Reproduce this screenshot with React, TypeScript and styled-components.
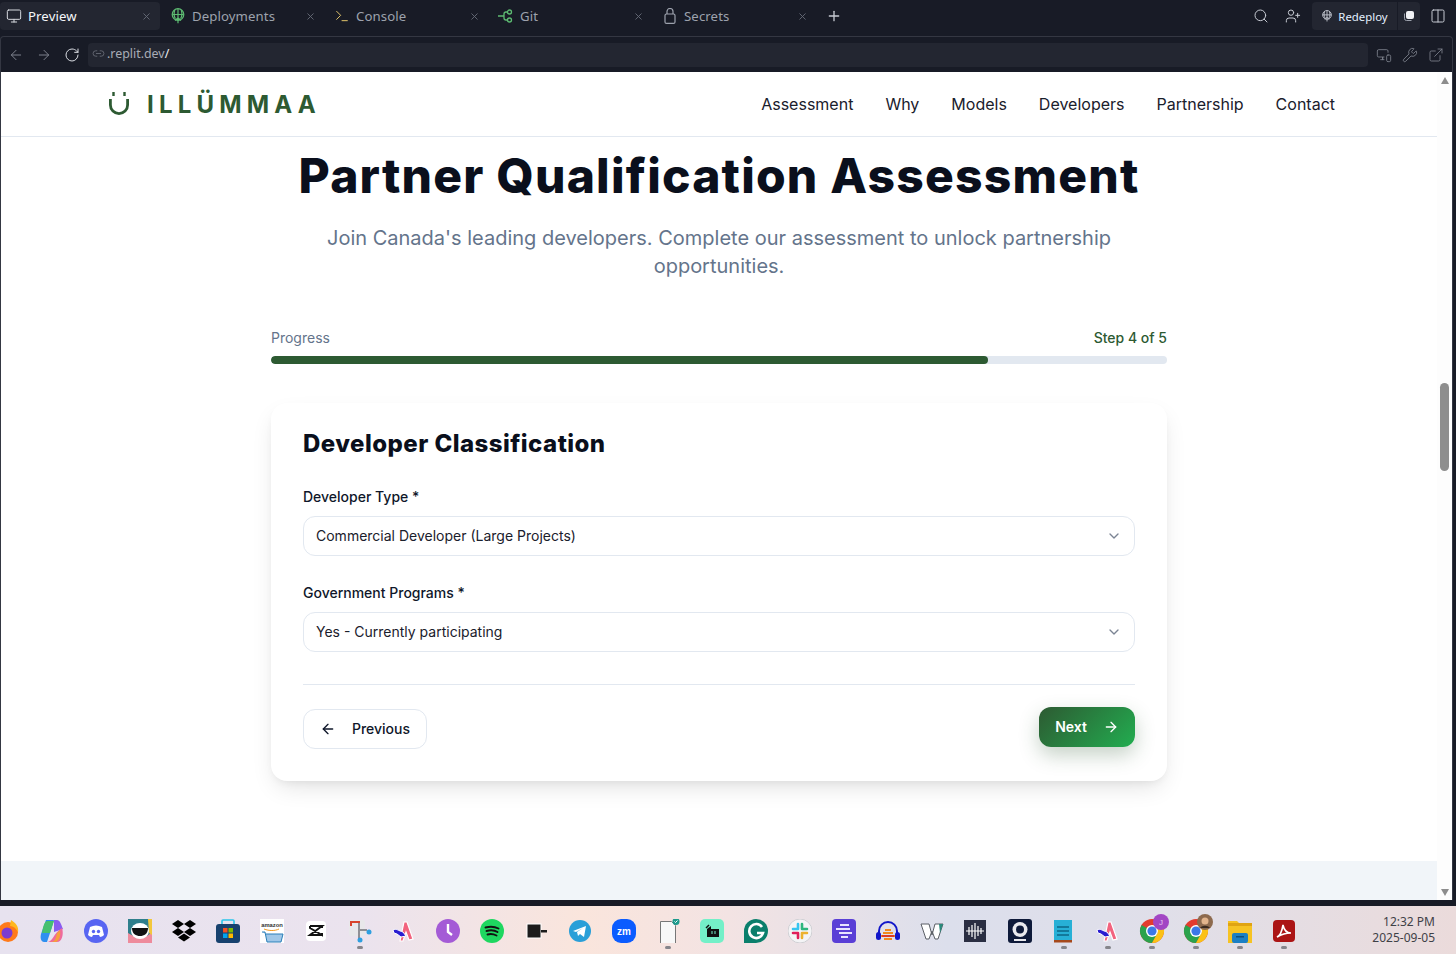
import React from "react";
import styled, { createGlobalStyle } from "styled-components";
import {
  ArrowLeft,
  ArrowRight,
  ChevronDown,
  Columns2,
  ExternalLink,
  Link2,
  Monitor,
  MonitorSmartphone,
  Plus,
  RotateCw,
  Search,
  Terminal,
  UserPlus,
  Wrench,
  X,
} from "lucide-react";

const GlobalStyle = createGlobalStyle`
  html, body {
    margin: 0;
    padding: 0;
    overflow: hidden;
  }
  body {
    font-family: "Inter", "Liberation Sans", sans-serif;
    background: #181b26;
  }
  * {
    box-sizing: border-box;
  }
`;

const Shell = styled.div`
  width: 1456px;
  height: 954px;
  display: flex;
  flex-direction: column;
  overflow: hidden;
  background: #181b26;
`;

const TabBar = styled.div`
  height: 36px;
  flex: none;
  display: flex;
  align-items: flex-start;
  padding-top: 2px;
`;

const Tab = styled.div<{ $active?: boolean }>`
  width: 160px;
  height: 28px;
  margin-right: 4px;
  padding: 0 8px 0 6px;
  display: flex;
  align-items: center;
  gap: 6px;
  border-radius: 4px;
  background: ${(p) => (p.$active ? "#232631" : "transparent")};
  color: ${(p) => (p.$active ? "#f5f7fa" : "#9da2ad")};
  font-family: "Noto Sans", sans-serif;
  font-size: 13.2px;
  letter-spacing: 0.1px;
`;

const TabIcon = styled.span<{ $color: string }>`
  width: 16px;
  height: 16px;
  flex: none;
  display: flex;
  align-items: center;
  justify-content: center;
  color: ${(p) => p.$color};
`;

const TabLabel = styled.span`
  flex: 1;
`;

const CloseIcon = styled(X)`
  width: 11px;
  height: 11px;
  color: #666b77;
`;

const AddTab = styled(Plus)`
  width: 16px;
  height: 16px;
  color: #c6cad2;
  margin: 6px 0 0 6px;
`;

const TabActions = styled.div`
  margin-left: auto;
  height: 28px;
  display: flex;
  align-items: center;
  padding-right: 10px;
  color: #c6cad2;
`;

const ActionIcon = styled.span`
  width: 16px;
  height: 16px;
  margin-right: 16px;
  display: flex;
`;

const RedeployGroup = styled.div`
  height: 28px;
  width: 85px;
  margin-left: -5px;
  display: flex;
  align-items: center;
  justify-content: center;
  gap: 5px;
  border-radius: 4px 0 0 4px;
  background: #232631;
  color: #e4f0ff;
  font-family: "Noto Sans", sans-serif;
  font-size: 11.4px;
`;

const RedeployIcon = styled.span`
  display: flex;
  color: #c6cad2;
`;

const StackButton = styled.div`
  width: 22px;
  height: 28px;
  margin: 0 10px 0 1px;
  display: flex;
  align-items: center;
  justify-content: center;
  border-radius: 0 4px 4px 0;
  background: #232631;
`;

const Frame = styled.div`
  flex: 1;
  min-height: 0;
  margin-right: 3px;
  display: flex;
  flex-direction: column;
  border: 1px solid #343742;
  border-bottom: none;
  border-radius: 4px 4px 0 0;
`;

const UrlRow = styled.div`
  height: 35px;
  flex: none;
  display: flex;
  align-items: center;
  padding-left: 1px;
  color: #8d919c;
`;

const NavButton = styled.span<{ $light?: boolean }>`
  width: 28px;
  height: 16px;
  flex: none;
  display: flex;
  justify-content: center;
  color: ${(p) => (p.$light ? "#d9dce2" : "#7d818c")};
`;

const UrlField = styled.div`
  width: 1280px;
  height: 24px;
  margin-left: 2px;
  padding: 0 0 2px 4px;
  display: flex;
  align-items: center;
  gap: 2px;
  border-radius: 4px;
  background: #232631;
  color: #a8acb6;
  font-family: "Noto Sans", sans-serif;
  font-size: 12.4px;
`;

const UrlSlash = styled.span`
  color: #f0f1f4;
`;

const UrlTools = styled.div`
  flex: 1;
  display: flex;
  justify-content: flex-end;
  gap: 10px;
  padding-right: 8px;
  color: #80848f;
`;

const Viewport = styled.div`
  flex: 1;
  min-height: 0;
  display: flex;
  background: #fff;
`;

const Page = styled.div`
  flex: 1;
  min-width: 0;
  display: flex;
  flex-direction: column;
  overflow: hidden;
  background: #fff;
`;

const ScrollTrack = styled.div`
  width: 15px;
  flex: none;
  display: flex;
  flex-direction: column;
  align-items: center;
  background: #fdfdfd;
  padding-top: 5px;
`;

const ScrollArrow = styled.div<{ $down?: boolean }>`
  width: 0;
  height: 0;
  border-left: 4.5px solid transparent;
  border-right: 4.5px solid transparent;
  ${(p) =>
    p.$down
      ? "border-top: 7px solid #8d8d8d; margin-top: auto; margin-bottom: 4px;"
      : "border-bottom: 7px solid #8d8d8d;"}
`;

const ScrollThumb = styled.div`
  width: 9px;
  height: 88px;
  margin-top: 299px;
  border-radius: 5px;
  background: #8e8e8e;
`;

const Header = styled.header`
  height: 65px;
  flex: none;
  display: flex;
  align-items: center;
  padding: 0 102px 0 108px;
  border-bottom: 1px solid #e2e8f0;
`;

const Logo = styled.div`
  display: flex;
  align-items: center;
  gap: 16px;
  color: #2d5a32;
`;

const LogoText = styled.span`
  font-family: "Inter", sans-serif;
  font-weight: 700;
  font-size: 24px;
  letter-spacing: 5.2px;
`;

const Menu = styled.nav`
  margin-left: auto;
  display: flex;
  gap: 32px;
`;

const MenuLink = styled.a`
  font-size: 16px;
  color: #1a202c;
`;

const Main = styled.main`
  flex: 1;
  min-height: 0;
  display: flex;
  flex-direction: column;
  align-items: center;
`;

const Title = styled.h1`
  margin: 9px 0 0;
  font-family: "Inter", sans-serif;
  font-size: 48px;
  line-height: 60px;
  font-weight: 800;
  letter-spacing: 1.2px;
  color: #0a0f1c;
`;

const Subtitle = styled.p`
  width: 800px;
  margin: 18px 0 0;
  font-size: 20px;
  line-height: 28px;
  text-align: center;
  color: #64748b;
`;

const Progress = styled.section`
  width: 896px;
  margin-top: 48px;
`;

const ProgressRow = styled.div`
  display: flex;
  justify-content: space-between;
  font-size: 14px;
  line-height: 20px;
  color: #64748b;
`;

const ProgressStep = styled.span`
  font-weight: 500;
  color: #2d5a32;
`;

const ProgressTrack = styled.div`
  height: 8px;
  margin-top: 8px;
  border-radius: 4px;
  background: #e2e8f0;
  overflow: hidden;
`;

const ProgressFill = styled.div`
  height: 100%;
  border-radius: 4px;
  background: #2d5a32;
`;

const Card = styled.section`
  width: 896px;
  margin-top: 39px;
  padding: 25px 32px 32px;
  border-radius: 16px;
  background: #fff;
  box-shadow: 0 10px 25px -5px rgba(0, 0, 0, 0.12), 0 4px 10px -4px rgba(0, 0, 0, 0.08);
`;

const CardTitle = styled.h2`
  margin: 0 0 25px;
  font-family: "Inter", sans-serif;
  font-size: 24px;
  line-height: 32px;
  font-weight: 800;
  letter-spacing: 0.46px;
  color: #0a0f1c;
`;

const Field = styled.div`
  margin-bottom: 25px;
`;

const FieldLabel = styled.label`
  display: block;
  margin-bottom: 7px;
  font-size: 14px;
  line-height: 24px;
  font-weight: 500;
  color: #0f172a;
`;

const Select = styled.div`
  height: 40px;
  padding: 0 12px 1px;
  display: flex;
  align-items: center;
  justify-content: space-between;
  border: 1px solid #e2e8f0;
  border-radius: 12px;
  font-size: 14px;
  color: #1a202c;
`;

const SelectChevron = styled(ChevronDown)`
  width: 16px;
  height: 16px;
  color: #7b8494;
`;

const Actions = styled.div`
  margin-top: 32px;
  padding-top: 22px;
  display: flex;
  justify-content: space-between;
  align-items: flex-start;
  border-top: 1px solid #e2e8f0;
`;

const BackButton = styled.button`
  width: 124px;
  height: 40px;
  margin-top: 2px;
  padding: 0 0 1px;
  display: flex;
  align-items: center;
  justify-content: center;
  gap: 16px;
  border: 1px solid #e2e8f0;
  border-radius: 12px;
  background: #fff;
  font-family: inherit;
  font-size: 14px;
  font-weight: 500;
  color: #0f172a;
`;

const NextButton = styled.button`
  width: 96px;
  height: 40px;
  padding: 0 0 1px;
  display: flex;
  align-items: center;
  justify-content: center;
  gap: 16px;
  border: none;
  border-radius: 12px;
  background: linear-gradient(135deg, #2d5a32, #22ad50);
  box-shadow: 0 8px 20px rgba(45, 90, 50, 0.28);
  font-family: inherit;
  font-size: 14px;
  font-weight: 600;
  color: #fff;
`;

const FooterBand = styled.div`
  height: 39px;
  flex: none;
  background: #f1f5f9;
  margin-top: auto;
`;

const BottomStrip = styled.div`
  height: 6px;
  flex: none;
  background: #181b26;
`;

const Taskbar = styled.div`
  height: 48px;
  flex: none;
  display: flex;
  align-items: center;
  padding-top: 2px;
  background: linear-gradient(90deg, #e7e2ef 0%, #ebe3ee 25%, #fae5dc 40%, #f3e3e3 50%, #dcdfec 65%, #e0dfe9 80%, #ebdbdb 100%);
  color: #3f4147;
`;

const TrayIcons = styled.div`
  display: flex;
  gap: 20px;
  margin-left: -4px;
`;

const TrayItem = styled.div<{ $running?: boolean }>`
  width: 24px;
  height: 24px;
  position: relative;
  svg {
    display: block;
  }
  &::after {
    content: "";
    display: ${(p) => (p.$running ? "block" : "none")};
    position: absolute;
    left: 9px;
    bottom: -6px;
    width: 6px;
    height: 3px;
    border-radius: 2px;
    background: #85858b;
  }
`;

const Clock = styled.div`
  margin-left: auto;
  margin-top: -2px;
  padding-right: 21px;
  text-align: right;
  font-family: "Noto Sans", sans-serif;
  font-size: 12px;
  line-height: 16px;
`;

const GreenGlobe = ({ size }: { size: number }) => (
  <svg width={size} height={size} viewBox="0 0 16 16" fill="none" stroke="currentColor" strokeWidth="1.2">
    <circle cx="8" cy="6.5" r="5.8" />
    <path d="M2.2 6.500h11.600M8 .7v14.600M4.800 2c-1 2.600-1 6 .6 8.600M11.200 2c1 2.600 1 6-.6 8.600M5 12.500 8 9.800l3 2.700" />
  </svg>
);

const GitNodes = () => (
  <svg width="16" height="16" viewBox="0 0 16 16" fill="none" stroke="currentColor" strokeWidth="1.300">
    <path d="M0 8h6M9.500 4H8a2 2 0 0 0-2 2v4a2 2 0 0 0 2 2h1.500" />
    <circle cx="11.500" cy="4" r="2" />
    <circle cx="11.500" cy="12" r="2" />
  </svg>
);

const Padlock = () => (
  <svg width="16" height="16" viewBox="0 0 16 16" fill="none" stroke="currentColor" strokeWidth="1.200">
    <rect x="3" y="6" width="10" height="9.400" rx="1.500" />
    <path d="M5 6V3.500a3 3 0 0 1 6 0V6" />
  </svg>
);

const Grid = ({ children }: { children: React.ReactNode }) => (
  <svg width="24" height="24" viewBox="0 0 24 24">
    {children}
  </svg>
);

const ArcArt = () => (
  <Grid>
    <path d="M8 22 12 3h3l6 17-4 1-3-8-3 9z" fill="#f2637e" stroke="#fff" strokeWidth="1.200" />
    <path d="M1 11c3-2 6 1 10 2l3 4-5 1-4-3-3-1z" fill="#2a1dd0" stroke="#fff" strokeWidth="1" />
  </Grid>
);

const ChromeArt = ({ children }: { children: React.ReactNode }) => (
  <svg width="30" height="30" viewBox="0 0 30 30" style={{ overflow: "visible" }}>
    <circle cx="12" cy="12" r="12" fill="#e33b2e" />
    <path d="M12 12 1.600 6A12 12 0 0 0 12 24l6-10z" fill="#2ba24c" />
    <path d="M12 6h10.400A12 12 0 0 1 12 24l6-11z" fill="#fbc116" />
    <circle cx="12" cy="12" r="6" fill="#fff" />
    <circle cx="12" cy="12" r="4.600" fill="#3b78e7" />
    {children}
  </svg>
);

const trayIcons: { key: string; running?: boolean; art: React.ReactNode }[] = [
  {
    key: "firefox",
    art: (
      <Grid>
        <circle cx="12" cy="13" r="10" fill="#ff7a1a" />
        <circle cx="11" cy="14" r="5.500" fill="#7d3bd1" />
        <path d="M15 1c5 3 8 7 7 12-2-4-5-6-8-6z" fill="#ffb81f" />
      </Grid>
    ),
  },
  {
    key: "copilot",
    art: (
      <Grid>
        <path d="M6 1h8l-3 10-4 12H4C1 23 0 19 1 15z" fill="#2f8ff0" />
        <path d="M7 2h7l-4 12H2C3 8 4 3 7 2z" fill="#46c06f" />
        <path d="M14 1h3c3 0 4 4 6 9l-9 3z" fill="#8a5cf0" />
        <path d="M22 9c2 6 0 14-5 14H8c5-1 5-8 14-14z" fill="#ef6a9c" />
        <path d="M11 23c4 0 5-4 6-9l3-3c1 6-1 12-5 12z" fill="#f6a03c" />
      </Grid>
    ),
  },
  {
    key: "discord",
    art: (
      <Grid>
        <circle cx="12" cy="12" r="12" fill="#5865f2" />
        <path d="M6 8c4-2 8-2 12 0l2 8c-1 1-3 2-4 2l-1-2H9l-1 2c-1 0-3-1-4-2z" fill="#fff" />
        <circle cx="9.500" cy="12.500" r="1.700" fill="#5865f2" />
        <circle cx="14.500" cy="12.500" r="1.700" fill="#5865f2" />
      </Grid>
    ),
  },
  {
    key: "ublock",
    art: (
      <Grid>
        <rect width="24" height="24" fill="#2f7f8c" />
        <path d="M0 14c6 4 18 8 24-2v12H0z" fill="#ee8b9c" />
        <path d="M20 0h4v16l-3-2z" fill="#f3c73c" />
        <ellipse cx="12" cy="12" rx="9" ry="8" fill="#fff" />
        <path d="M4 9h16c0 6-4 8-8 8s-8-2-8-8z" fill="#111" />
      </Grid>
    ),
  },
  {
    key: "dropbox",
    art: (
      <Grid>
        <path d="M6 1 0 5l6 4-6 4 6 4 6-4 6 4 6-4-6-4 6-4-6-4-6 4zM12 5l6 4-6 4-6-4z" fill="#000" fillRule="evenodd" />
        <path d="m6 18.500 6-4 6 4-6 4z" fill="#000" />
      </Grid>
    ),
  },
  {
    key: "store",
    art: (
      <Grid>
        <path d="M6 5V2c0-1 1-1 1-1h10s1 0 1 1v3" fill="none" stroke="#29c5ea" strokeWidth="1.600" />
        <rect y="5" width="24" height="19" rx="3" fill="#17416e" />
        <rect x="7" y="9" width="4.500" height="4.500" fill="#f25022" />
        <rect x="12.500" y="9" width="4.500" height="4.500" fill="#7fba00" />
        <rect x="7" y="14.500" width="4.500" height="4.500" fill="#00a4ef" />
        <rect x="12.500" y="14.500" width="4.500" height="4.500" fill="#ffb900" />
      </Grid>
    ),
  },
  {
    key: "amazon",
    art: (
      <Grid>
        <rect width="24" height="24" fill="#fff" />
        <text x="12" y="8" fontSize="5.800" fontWeight="700" textAnchor="middle" fill="#333" fontFamily="Liberation Sans">
          amazon
        </text>
        <path d="M4 10c5 2 11 2 15 0" fill="none" stroke="#f39a1e" strokeWidth="1" />
        <path d="M2 13h3l2 10h14l2-8H6" fill="#9fc7e8" stroke="#2a7fb8" strokeWidth="1" />
      </Grid>
    ),
  },
  {
    key: "capcut",
    art: (
      <Grid>
        <rect x="2" y="2" width="20" height="20" rx="4" fill="#fff" />
        <path d="M6 7h12l-12 9h12M6 7v2l12 7v-2M18 7v2" fill="none" stroke="#111" strokeWidth="2" />
      </Grid>
    ),
  },
  {
    key: "snip",
    running: true,
    art: (
      <Grid>
        <rect x="1" y="1" width="16" height="16" rx="2" fill="#e8e8ea" />
        <path d="M2 2h10v2H4v3H2z" fill="#d8442c" />
        <path d="M11 4v16M11 11h8" stroke="#8f9095" strokeWidth="2" />
        <circle cx="21" cy="13" r="2.500" fill="#2e9fe0" />
        <circle cx="12" cy="21" r="2.500" fill="#2e9fe0" />
      </Grid>
    ),
  },
  { key: "arc", art: <ArcArt /> },
  {
    key: "clockify",
    art: (
      <Grid>
        <circle cx="12" cy="12" r="12" fill="#a45bd6" />
        <path d="M12 5v8l4 3" fill="none" stroke="#fff" strokeWidth="2.400" />
      </Grid>
    ),
  },
  {
    key: "spotify",
    art: (
      <Grid>
        <circle cx="12" cy="12" r="12" fill="#1ed760" />
        <path d="M5.500 8.500c4-1 9-1 13 1M6.500 12c3.500-1 8-.8 11 1M7.500 15.500c3-.8 6-.5 9 1" fill="none" stroke="#111" strokeWidth="1.900" strokeLinecap="round" />
      </Grid>
    ),
  },
  {
    key: "block",
    art: (
      <Grid>
        <rect x="3" y="5" width="14" height="14" fill="#1c1c1c" stroke="#fff" />
        <rect x="17" y="11" width="6" height="2.500" fill="#1c1c1c" />
      </Grid>
    ),
  },
  {
    key: "telegram",
    art: (
      <Grid>
        <circle cx="12" cy="12" r="11" fill="#2a9fd8" />
        <path d="m5 12 13-5-2 11-4-3-2 2-1-4 6-4-7 4z" fill="#fff" />
      </Grid>
    ),
  },
  {
    key: "zoom",
    art: (
      <Grid>
        <rect width="24" height="24" rx="9" fill="#0b5cff" />
        <text x="12" y="15.500" fontSize="10" fontWeight="700" textAnchor="middle" fill="#fff" fontFamily="Liberation Sans">
          zm
        </text>
      </Grid>
    ),
  },
  {
    key: "file",
    running: true,
    art: (
      <Grid>
        <path d="M4.500 2.500h11l4 4v18h-15z" fill="#f8f8f8" stroke="#777" />
        <circle cx="20" cy="2.500" r="3.500" fill="#1d9a8c" />
        <path d="m18.500 2.500 1 1 2-2" fill="none" stroke="#fff" />
      </Grid>
    ),
  },
  {
    key: "sider",
    art: (
      <Grid>
        <rect width="24" height="24" rx="5" fill="#74f0c8" />
        <path d="M7 10 11 7v3h8v8H7z" fill="#111" />
        <path d="M6 9l3-3" stroke="#111" strokeWidth="1.500" />
        <path d="M12 12v3M15 12v3" stroke="#74f0c8" />
      </Grid>
    ),
  },
  {
    key: "grammarly",
    art: (
      <Grid>
        <path d="M12 0a12 12 0 0 1 0 24H0V12A12 12 0 0 1 12 0z" fill="#0a7f6c" />
        <path d="M18 8a7 7 0 1 0 1 6h-6" fill="none" stroke="#fff" strokeWidth="2.600" />
      </Grid>
    ),
  },
  {
    key: "slack",
    art: (
      <Grid>
        <circle cx="12" cy="12" r="12" fill="#f4f4f6" stroke="#d0d0d4" />
        <path d="M10 5v5M5 10h5" stroke="#36c5f0" strokeWidth="2.600" strokeLinecap="round" />
        <path d="M14 5v5M14 10h5" stroke="#2eb67d" strokeWidth="2.600" strokeLinecap="round" />
        <path d="M14 19v-5M19 14h-5" stroke="#ecb22e" strokeWidth="2.600" strokeLinecap="round" />
        <path d="M10 19v-5M5 14h5" stroke="#e01e5a" strokeWidth="2.600" strokeLinecap="round" />
      </Grid>
    ),
  },
  {
    key: "linear",
    art: (
      <Grid>
        <rect width="24" height="24" rx="4" fill="#5a3fd6" />
        <path d="M8 6h9M4 10h14M7 14h13M9 18h7" stroke="#e8e4ff" strokeWidth="1.800" />
      </Grid>
    ),
  },
  {
    key: "audacity",
    art: (
      <Grid>
        <path d="M3 15v-3a9 9 0 0 1 18 0v3" fill="none" stroke="#1216c9" strokeWidth="2" />
        <rect x="0" y="13" width="5" height="8" rx="2.500" fill="#1216c9" />
        <rect x="19" y="13" width="5" height="8" rx="2.500" fill="#1216c9" />
        <path d="M5 17h14M7 14h10M9 11h6M8 20h8" stroke="#f28a1c" strokeWidth="2" />
        <path d="M6 17h12" stroke="#d6202a" strokeWidth="1.500" />
      </Grid>
    ),
  },
  {
    key: "wikipedia",
    art: (
      <Grid>
        <path d="M1 5h8l3 11 3-11h8l-5 15h-3l-3-8-3 8H6z" fill="#fff" stroke="#5b5f66" strokeWidth="1" />
        <path d="M19 5h4l-3 9z" fill="#2a8a7c" />
      </Grid>
    ),
  },
  {
    key: "wave",
    art: (
      <Grid>
        <rect y="1" width="22" height="22" fill="#2a2e42" />
        <path d="M2 12h18M5 8v8M8 6v12M11 4v16M14 7v10M17 9v6" stroke="#fff" strokeWidth="1.200" />
      </Grid>
    ),
  },
  {
    key: "webcam",
    art: (
      <Grid>
        <rect width="24" height="24" rx="3" fill="#0e1a3a" />
        <circle cx="12" cy="10.500" r="7.500" fill="#e9e9ee" />
        <circle cx="12" cy="10.500" r="4" fill="#0e1a3a" />
        <path d="M6 21h12" stroke="#e9e9ee" strokeWidth="2" />
      </Grid>
    ),
  },
  {
    key: "notepad",
    running: true,
    art: (
      <Grid>
        <rect x="2" y="1" width="18" height="22" fill="#27b0d6" />
        <rect x="2" y="21" width="18" height="2.500" fill="#a5491c" />
        <path d="M5 8h12M5 12h12M5 16h12" stroke="#0c6788" strokeWidth="1.600" />
      </Grid>
    ),
  },
  { key: "arc2", running: true, art: <ArcArt /> },
  {
    key: "chrome-j",
    running: true,
    art: (
      <ChromeArt>
        <circle cx="21" cy="3" r="8" fill="#a246c4" />
        <text x="21" y="6" fontSize="8" textAnchor="middle" fill="#e7c9f3" fontFamily="Liberation Sans">
          J
        </text>
      </ChromeArt>
    ),
  },
  {
    key: "chrome-photo",
    running: true,
    art: (
      <ChromeArt>
        <circle cx="21" cy="3" r="8" fill="#8d6a4e" />
        <circle cx="21" cy="2" r="3.500" fill="#e2b48c" />
        <path d="M16 9c2-3 8-3 10 0" fill="#3a2a20" />
      </ChromeArt>
    ),
  },
  {
    key: "explorer",
    running: true,
    art: (
      <Grid>
        <path d="M0 2h9l2 2h13v20H0z" fill="#f6c323" />
        <rect y="4" width="24" height="3" fill="#e0a412" />
        <rect x="4" y="14" width="16" height="10" rx="2" fill="#1b7fc4" />
        <rect x="8" y="17" width="8" height="1.500" fill="#0d4f80" />
      </Grid>
    ),
  },
  {
    key: "acrobat",
    running: true,
    art: (
      <Grid>
        <rect x="1" y="1" width="22" height="22" rx="4" fill="#ab1414" />
        <path d="M5 18c3-1 5-6 6-12 1 5 4 8 8 8-4 0-9 1-14 4z" fill="none" stroke="#fff" strokeWidth="1.600" />
      </Grid>
    ),
  },
];

const App: React.FC<{}> = () => {
  const step = 4;
  const totalSteps = 5;

  return (
    <Shell>
      <GlobalStyle />
      <TabBar>
        <Tab $active>
          <TabIcon $color="#d6d9df">
            <Monitor size={16} strokeWidth={1.5} />
          </TabIcon>
          <TabLabel>Preview</TabLabel>
          <CloseIcon />
        </Tab>
        <Tab>
          <TabIcon $color="#5dbb72">
            <GreenGlobe size={16} />
          </TabIcon>
          <TabLabel>Deployments</TabLabel>
          <CloseIcon />
        </Tab>
        <Tab>
          <TabIcon $color="#e0c36a">
            <Terminal size={16} strokeWidth={1.5} />
          </TabIcon>
          <TabLabel>Console</TabLabel>
          <CloseIcon />
        </Tab>
        <Tab>
          <TabIcon $color="#5dbb72">
            <GitNodes />
          </TabIcon>
          <TabLabel>Git</TabLabel>
          <CloseIcon />
        </Tab>
        <Tab>
          <TabIcon $color="#9da2ad">
            <Padlock />
          </TabIcon>
          <TabLabel>Secrets</TabLabel>
          <CloseIcon />
        </Tab>
        <AddTab />
        <TabActions>
          <ActionIcon>
            <Search size={16} strokeWidth={1.5} />
          </ActionIcon>
          <ActionIcon>
            <UserPlus size={16} strokeWidth={1.5} />
          </ActionIcon>
          <RedeployGroup>
            <RedeployIcon>
              <GreenGlobe size={12} />
            </RedeployIcon>
            Redeploy
          </RedeployGroup>
          <StackButton>
            <svg width="12" height="12" viewBox="0 0 12 12" fill="#f0f1f4">
              <rect x="3" y="1" width="8" height="8" rx="2" />
              <path d="M1.500 3.500v5a2 2 0 0 0 2 2h5" fill="none" stroke="#9da2ad" />
            </svg>
          </StackButton>
          <Columns2 size={16} strokeWidth={1.5} />
        </TabActions>
      </TabBar>
      <Frame>
        <UrlRow>
          <NavButton>
            <ArrowLeft size={16} strokeWidth={1.5} />
          </NavButton>
          <NavButton>
            <ArrowRight size={16} strokeWidth={1.5} />
          </NavButton>
          <NavButton $light>
            <RotateCw size={16} strokeWidth={1.5} />
          </NavButton>
          <UrlField>
            <Link2 size={13} strokeWidth={1.5} color="#6c707b" />
            <span>
              .replit.dev<UrlSlash>/</UrlSlash>
            </span>
          </UrlField>
          <UrlTools>
            <MonitorSmartphone size={16} strokeWidth={1.25} />
            <Wrench size={16} strokeWidth={1.25} />
            <ExternalLink size={16} strokeWidth={1.25} />
          </UrlTools>
        </UrlRow>
        <Viewport>
          <Page>
            <Header>
              <Logo>
                <svg width="22" height="26" viewBox="0 0 22 26" fill="none" stroke="#2d5a32" strokeWidth="2.800">
                  <path d="M1.400 8v6a8.600 8.600 0 0 0 17.200 0V8" />
                  <path d="M4.500 1v4M15.500 1v4" strokeWidth="2.400" />
                </svg>
                <LogoText>ILLÜMMAA</LogoText>
              </Logo>
              <Menu>
                <MenuLink>Assessment</MenuLink>
                <MenuLink>Why</MenuLink>
                <MenuLink>Models</MenuLink>
                <MenuLink>Developers</MenuLink>
                <MenuLink>Partnership</MenuLink>
                <MenuLink>Contact</MenuLink>
              </Menu>
            </Header>
            <Main>
              <Title>Partner Qualification Assessment</Title>
              <Subtitle>
                Join Canada's leading developers. Complete our assessment to unlock partnership opportunities.
              </Subtitle>
              <Progress>
                <ProgressRow>
                  <span>Progress</span>
                  <ProgressStep>
                    Step {step} of {totalSteps}
                  </ProgressStep>
                </ProgressRow>
                <ProgressTrack>
                  <ProgressFill style={{ width: `${(step / totalSteps) * 100}%` }} />
                </ProgressTrack>
              </Progress>
              <Card>
                <CardTitle>Developer Classification</CardTitle>
                <Field>
                  <FieldLabel>Developer Type *</FieldLabel>
                  <Select>
                    Commercial Developer (Large Projects)
                    <SelectChevron />
                  </Select>
                </Field>
                <Field>
                  <FieldLabel>Government Programs *</FieldLabel>
                  <Select>
                    Yes - Currently participating
                    <SelectChevron />
                  </Select>
                </Field>
                <Actions>
                  <BackButton>
                    <ArrowLeft size={16} />
                    Previous
                  </BackButton>
                  <NextButton>
                    Next
                    <ArrowRight size={16} />
                  </NextButton>
                </Actions>
              </Card>
            </Main>
            <FooterBand />
          </Page>
          <ScrollTrack>
            <ScrollArrow />
            <ScrollThumb />
            <ScrollArrow $down />
          </ScrollTrack>
        </Viewport>
      </Frame>
      <BottomStrip />
      <Taskbar>
        <TrayIcons>
          {trayIcons.map((icon) => (
            <TrayItem key={icon.key} $running={icon.running}>
              {icon.art}
            </TrayItem>
          ))}
        </TrayIcons>
        <Clock>
          12:32 PM
          <br />
          2025-09-05
        </Clock>
      </Taskbar>
    </Shell>
  );
};

export default App;
